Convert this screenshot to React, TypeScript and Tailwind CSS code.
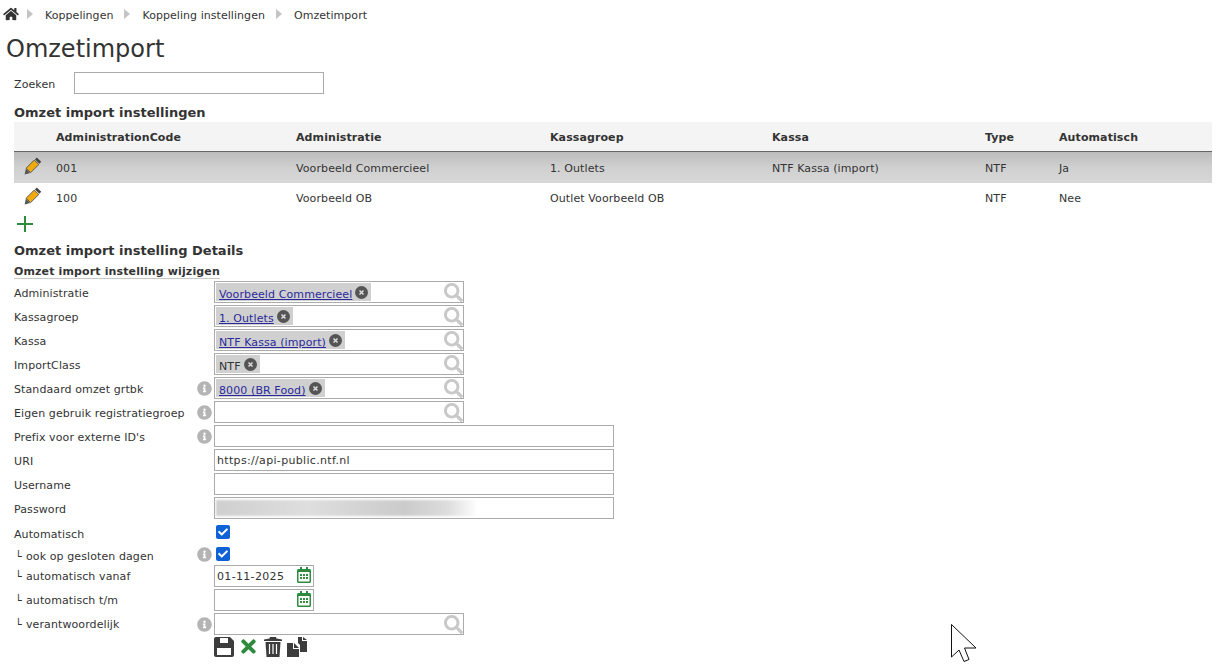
import { FaHome, FaSearch, FaInfoCircle, FaTimes, FaRegCalendarAlt, FaCheck } from 'react-icons/fa';

const columns = 'grid grid-cols-[42px_240px_254px_222px_213px_74px_1fr] items-center';

const rows = [
  ['001', 'Voorbeeld Commercieel', '1. Outlets', 'NTF Kassa (import)', 'NTF', 'Ja'],
  ['100', 'Voorbeeld OB', 'Outlet Voorbeeld OB', '', 'NTF', 'Nee'],
];

function Pencil() {
  return (
    <svg width="18" height="18" viewBox="0 0 18 18" className="ml-[10px] -translate-y-[3px]">
      <path d="M12.8 0.6 17.2 4.8 15.4 6.8 10.9 2.5Z" fill="#444" />
      <path d="M10.2 3.1 14.8 7.5 6.6 15.6 2.1 11.2Z" fill="#eeaa0f" stroke="#444" strokeWidth="0.8" />
      <path d="M1.9 11.6 6.2 15.9 0.6 17.4Z" fill="#555" />
    </svg>
  );
}

function Chevron() {
  return <span className="block w-0 h-0 border-y-[5px] border-y-transparent border-l-[6px] border-l-[#c4c4c4] mt-[-3px]" />;
}

function ClearIcon() {
  return (
    <svg width="13" height="13" viewBox="0 0 13 13" className="shrink-0">
      <circle cx="6.5" cy="6.5" r="6.5" fill="#555" />
      <path d="M4.5 4.5 8.5 8.5M8.5 4.5 4.5 8.5" stroke="#ddd" strokeWidth="1.5" />
    </svg>
  );
}

function Tag({ label, link }: { label: string; link?: boolean }) {
  return (
    <span className="flex items-center h-[18px] bg-[#d0d0d0] px-[3px] gap-[3px] ml-[1px]">
      <span className={`pt-[5px] leading-[13px] ${link ? 'text-[#2a2a9c] underline' : 'text-[#333]'}`}>{label}</span>
      <ClearIcon />
    </span>
  );
}

function Row({ label, info, sub, children, className, labelClass }: { label: string; info?: boolean; sub?: boolean; children?: React.ReactNode; className?: string; labelClass?: string }) {
  return (
    <div className={`flex items-center pl-[14px] ${className ?? 'h-[24px]'}`}>
      <span className={`w-[184px] flex items-center ${labelClass ?? 'pt-[4px]'}`}>
        {sub && <span className="w-[12px] pl-[1px]">└</span>}
        {label}
      </span>
      <span className="w-[16px] flex items-center">
        {info && <FaInfoCircle className="text-[#b4b4b4] text-[15px] ml-[-1px]" />}
      </span>
      {children}
    </div>
  );
}

function Lookup({ children }: { children?: React.ReactNode }) {
  return (
    <div className="w-[250px] h-[22px] border border-[#ababab] flex items-center relative bg-white">
      {children}
      <FaSearch className="absolute right-0 top-[1px] text-[#c8c8c8] text-[19px]" />
    </div>
  );
}

function TextBox({ value, children }: { value?: string; children?: React.ReactNode }) {
  return (
    <div className="w-[400px] h-[22px] border border-[#ababab] flex items-center pl-[2px] pt-[2px] bg-white overflow-hidden tracking-[0.33px]">
      {value}
      {children}
    </div>
  );
}

function DateBox({ value }: { value?: string }) {
  return (
    <div className="w-[100px] h-[22px] border border-[#ababab] flex items-center justify-between pl-[2px] pr-[1px] bg-white tracking-[0.33px]">
      <span className="pt-[2px]">{value}</span>
      <FaRegCalendarAlt className="text-[#2e8b3e] text-[16px] mt-[-2px]" />
    </div>
  );
}

function Check() {
  return (
    <span className="w-[14px] h-[14px] ml-[2px] rounded-[2px] bg-[#0f62d6] flex items-center justify-center">
      <FaCheck className="text-white text-[10px]" />
    </span>
  );
}

function SaveIcon() {
  return (
    <svg width="20" height="20" viewBox="0 0 20 20">
      <path d="M0 2a2 2 0 0 1 2-2h14l4 4v14a2 2 0 0 1-2 2H2a2 2 0 0 1-2-2Z" fill="#3c3c3c" />
      <rect x="6" y="1" width="8" height="5" fill="#fff" />
      <rect x="3" y="11" width="14" height="7" fill="#fff" />
    </svg>
  );
}

function TrashIcon() {
  return (
    <svg width="18" height="20" viewBox="0 0 18 20">
      <path d="M0 2.5 5.5 1.5 6 0h6l.5 1.5 5.5 1v1.5H0Z" fill="#3c3c3c" />
      <path d="M1.5 5h15l-1 15h-13Z" fill="#3c3c3c" />
      <path d="M5.5 7v10M9 7v10M12.5 7v10" stroke="#fff" strokeWidth="1.2" />
    </svg>
  );
}

function CopyIcon() {
  return (
    <svg width="20" height="20" viewBox="0 0 20 20">
      <path d="M11 0h4v4h5v11h-7V8l-2-2Z" fill="#3c3c3c" />
      <path d="M16 0 20 3h-4Z" fill="#3c3c3c" />
      <path d="M0 6h6v6h6v8H0Z" fill="#3c3c3c" />
      <path d="M7 6l5 5H7Z" fill="#3c3c3c" />
    </svg>
  );
}

export default function App() {
  return (
    <div className="relative h-[668px] w-full overflow-hidden bg-white text-[11px] tracking-[0.1px] text-[#333] font-['DejaVu_Sans',Verdana,sans-serif]">
      <nav className="h-[30px] flex items-center pl-[3px] tracking-[0.05px]">
        <FaHome className="text-[#333] text-[14px] mt-[-2px] w-[16px]" />
        <span className="ml-[8px]"><Chevron /></span>
        <a className="ml-[12px] pt-[2px]">Koppelingen</a>
        <span className="ml-[11px]"><Chevron /></span>
        <a className="ml-[12px] pt-[2px]">Koppeling instellingen</a>
        <span className="ml-[11px]"><Chevron /></span>
        <a className="ml-[12px] pt-[2px]">Omzetimport</a>
      </nav>

      <h1 className="pl-[6px] h-[42px] leading-[39px] text-[24px] font-normal tracking-normal">Omzetimport</h1>

      <div className="flex items-center pl-[14px]">
        <span className="w-[60px] pt-[4px]">Zoeken</span>
        <div className="w-[250px] h-[22px] border border-[#ababab] bg-white" />
      </div>

      <h2 className="pl-[14px] pt-[11px] h-[28px] leading-[16px] text-[13px] font-bold tracking-normal">Omzet import instellingen</h2>

      <div className="ml-[14px] mr-[5px]">
        <div className={`${columns} h-[30px] pt-[4px] bg-[#f4f4f4] border-b border-[#666] font-bold`}>
          <span />
          <span>AdministrationCode</span>
          <span>Administratie</span>
          <span>Kassagroep</span>
          <span>Kassa</span>
          <span>Type</span>
          <span>Automatisch</span>
        </div>
        {rows.map((r, i) => (
          <div
            key={r[0]}
            className={`${columns} ${i === 0 ? 'h-[31px] pt-[3px] bg-gradient-to-b from-[#bcbcbc] via-[#d0d0d0] to-[#d8d8d8]' : 'h-[30px] pt-[2px]'}`}
          >
            <Pencil />
            {r.map((c, j) => (
              <span key={j}>{c}</span>
            ))}
          </div>
        ))}
      </div>

      <svg width="16" height="16" viewBox="0 0 16 16" className="ml-[17px] mt-[3px]">
        <path d="M7 0h2v7h7v2H9v7H7V9H0V7h7Z" fill="#2e8b3e" />
      </svg>

      <h2 className="pl-[14px] mt-[9px] h-[20px] leading-[20px] text-[13px] font-bold tracking-normal">Omzet import instelling Details</h2>

      <div className="pl-[14px]">
        <h3 className="w-fit h-[18px] pt-[4px] leading-[13px] font-bold tracking-[0.13px] border-b border-[#c8c8c8]">Omzet import instelling wijzigen</h3>
      </div>

      <div className="mt-[1px]">
        <Row label="Administratie"><Lookup><Tag link label="Voorbeeld Commercieel" /></Lookup></Row>
        <Row label="Kassagroep"><Lookup><Tag link label="1. Outlets" /></Lookup></Row>
        <Row label="Kassa"><Lookup><Tag link label="NTF Kassa (import)" /></Lookup></Row>
        <Row label="ImportClass"><Lookup><Tag label="NTF" /></Lookup></Row>
        <Row label="Standaard omzet grtbk" info><Lookup><Tag link label="8000 (BR Food)" /></Lookup></Row>
        <Row label="Eigen gebruik registratiegroep" info><Lookup /></Row>
        <Row label="Prefix voor externe ID's" info><TextBox /></Row>
        <Row label="URI"><TextBox value="https://api-public.ntf.nl" /></Row>
        <Row label="Username"><TextBox /></Row>
        <Row label="Password">
          <TextBox>
            <div className="w-[262px] h-[16px] mt-[-2px] ml-[-1px] bg-[linear-gradient(to_right,#cfcfcf,#dedede_35%,#d6d6d6_50%,#cbcbcb_72%,#dcdcdc_88%,transparent)] blur-[1px]" />
          </TextBox>
        </Row>
        <Row label="Automatisch" labelClass="pt-[6px]"><Check /></Row>
        <Row label="ook op gesloten dagen" info sub className="h-[20px]" labelClass="pt-[6px]"><Check /></Row>
        <Row label="automatisch vanaf" sub labelClass="pt-[2px]"><DateBox value="01-11-2025" /></Row>
        <Row label="automatisch t/m" sub labelClass="pt-[2px]"><DateBox /></Row>
        <Row label="verantwoordelijk" info sub labelClass="pt-[2px]"><Lookup /></Row>
      </div>

      <div className="flex items-center pl-[214px]">
        <SaveIcon />
        <FaTimes className="text-[#2e8b3e] text-[21px] ml-[4px]" />
        <span className="ml-[5px]"><TrashIcon /></span>
        <span className="ml-[5px]"><CopyIcon /></span>
      </div>

      {/* mouse pointer caught in the screenshot */}
      <svg width="28" height="40" viewBox="0 0 28 40" className="absolute left-[950px] top-[623px]">
        <path d="M1.5 1.5V34L9 27L14 38.5L19 36.5L14.5 25H26Z" fill="white" stroke="#111" strokeWidth="1" />
      </svg>
    </div>
  );
}
